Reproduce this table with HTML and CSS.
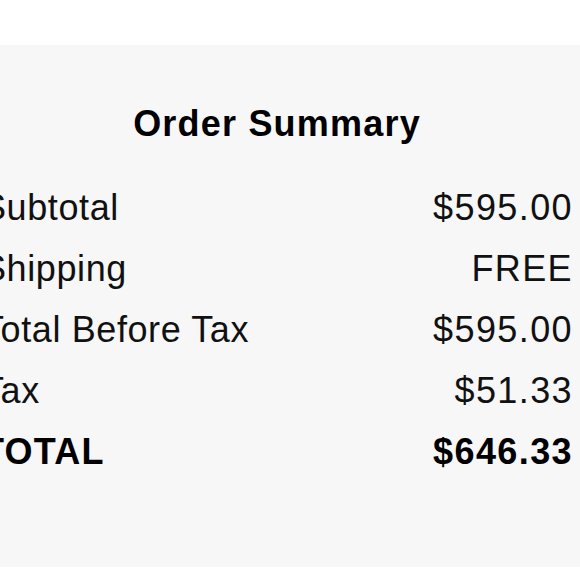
FILE: index.html
```html
<!DOCTYPE html>
<html lang="en">
<head>
<meta charset="utf-8">
<title>Order Summary</title>
<link rel="stylesheet" href="styles.css">
</head>
<body>
<div class="topbar"></div>
<section class="panel">
  <div class="summary">
    <h2 class="title">Order Summary</h2>
    <div class="row"><span class="label">Subtotal</span><span class="value">$595.00</span></div>
    <div class="row"><span class="label">Shipping</span><span class="value">FREE</span></div>
    <div class="row"><span class="label">Total Before Tax</span><span class="value">$595.00</span></div>
    <div class="row"><span class="label">Tax</span><span class="value">$51.33</span></div>
    <div class="row total"><span class="label">TOTAL</span><span class="value">$646.33</span></div>
  </div>
</section>
</body>
</html>
```
FILE: styles.css
```css
html, body {
  margin: 0;
  padding: 0;
  background: #ffffff;
  overflow: hidden;
}
body {
  width: 580px;
  height: 580px;
  font-family: "Liberation Sans", Arial, Helvetica, sans-serif;
  color: #111;
}
.topbar {
  height: 45px;
  background: #ffffff;
}
.panel {
  height: 522px;
  background: #f7f7f7;
  padding: 59px 8px 0 0;
  box-sizing: border-box;
  overflow: hidden;
}
.summary {
  margin-left: -18px;
  display: flex;
  flex-direction: column;
}
.title {
  margin: 0 0 33px;
  font-size: 36px;
  line-height: 40px;
  font-weight: 700;
  letter-spacing: 1.2px;
  text-align: center;
  color: #000;
}
.row {
  display: flex;
  justify-content: space-between;
  align-items: baseline;
  font-size: 36px;
  line-height: 61px;
}
.label {
  letter-spacing: 0.6px;
  white-space: nowrap;
}
.value {
  letter-spacing: 1.4px;
  white-space: nowrap;
  margin-right: -1px;
}
.total {
  font-weight: 700;
  color: #000;
}
.total .label {
  letter-spacing: 1.2px;
}
```
